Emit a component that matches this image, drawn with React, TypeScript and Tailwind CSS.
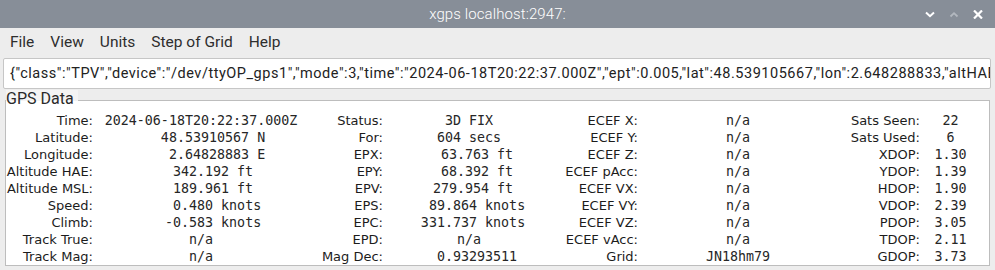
import React from "react";

const col1: [string, string][] = [
  ["Time:", "2024-06-18T20:22:37.000Z"],
  ["Latitude:", "   48.53910567 N"],
  ["Longitude:", "    2.64828883 E"],
  ["Altitude HAE:", "   342.192 ft"],
  ["Altitude MSL:", "   189.961 ft"],
  ["Speed:", "    0.480 knots"],
  ["Climb:", "   -0.583 knots"],
  ["Track True:", "n/a"],
  ["Track Mag:", "n/a"],
];
const col2: [string, string][] = [
  ["Status:", "3D FIX"],
  ["For:", "604 secs"],
  ["EPX:", "  63.763 ft"],
  ["EPY:", "  68.392 ft"],
  ["EPV:", " 279.954 ft"],
  ["EPS:", "  89.864 knots"],
  ["EPC:", " 331.737 knots"],
  ["EPD:", "n/a"],
  ["Mag Dec:", "  0.93293511"],
];
const col3: [string, string][] = [
  ["ECEF X:", "n/a"],
  ["ECEF Y:", "n/a"],
  ["ECEF Z:", "n/a"],
  ["ECEF pAcc:", "n/a"],
  ["ECEF VX:", "n/a"],
  ["ECEF VY:", "n/a"],
  ["ECEF VZ:", "n/a"],
  ["ECEF vAcc:", "n/a"],
  ["Grid:", "JN18hm79"],
];
const col4: [string, string][] = [
  ["Sats Seen:", "22"],
  ["Sats Used:", "6"],
  ["XDOP:", "1.30"],
  ["YDOP:", "1.39"],
  ["HDOP:", "1.90"],
  ["VDOP:", "2.39"],
  ["PDOP:", "3.05"],
  ["TDOP:", "2.11"],
  ["GDOP:", "3.73"],
];

const labelCls =
  "text-right whitespace-pre text-[13px] leading-[17px] text-[#1c1c1c] [font-family:'DejaVu_Sans',sans-serif]";
const valueCls =
  "text-center whitespace-pre text-[13.33px] leading-[17px] text-[#262626] [font-family:'DejaVu_Sans_Mono',monospace]";

export default function App() {
  const rows = col1.map((_, i) => [col1[i], col2[i], col3[i], col4[i]]);
  return (
    <div className="w-[995px] h-[270px] overflow-hidden bg-[#ededed] flex flex-col [font-family:Roboto,'Liberation_Sans',sans-serif]">
      {/* Title bar */}
      <div className="relative h-[28px] shrink-0 bg-[#878e98] flex items-center justify-center">
        <span className="text-white text-[15px] font-light tracking-[0.1px]">
          xgps localhost:2947:
        </span>
        <div className="absolute right-[12px] top-0 h-[28px] flex items-center gap-[14px]">
          <svg width="10" height="7" viewBox="0 0 10 7">
            <path d="M1 1.5 L5 5.2 L9 1.5" fill="none" stroke="#ffffff" strokeWidth="2" />
          </svg>
          <svg width="10" height="7" viewBox="0 0 10 7">
            <path d="M1.5 5.5 L5 2.2 L8.5 5.5" fill="none" stroke="#b3b8bf" strokeWidth="1.8" />
          </svg>
          <svg width="10" height="9" viewBox="0 0 10 9">
            <path d="M1 0.5 L9 8.5 M9 0.5 L1 8.5" fill="none" stroke="#ffffff" strokeWidth="2.2" />
          </svg>
        </div>
      </div>

      {/* Menu bar */}
      <div className="h-[30px] shrink-0 flex items-center pl-[2px] text-[15.5px] text-[#2e2e2e]">
        {["File", "View", "Units", "Step of Grid", "Help"].map((m) => (
          <span key={m} className="px-[8px]">
            {m}
          </span>
        ))}
      </div>

      {/* Entry */}
      <div className="mx-[3px] mr-[4px] h-[31px] shrink-0 bg-white border border-[#c6c6c6] rounded-[2px] flex items-center px-[6px] overflow-hidden">
        <span className="whitespace-pre text-[14.5px] tracking-[0.53px] text-[#222222]">
          {'{"class":"TPV","device":"/dev/ttyOP_gps1","mode":3,"time":"2024-06-18T20:22:37.000Z","ept":0.005,"lat":48.539105667,"lon":2.648288833,"altHAE":104.3}'}
        </span>
      </div>

      {/* Frame */}
      <div className="relative mt-[11px] ml-[5px] mr-[5px] shrink-0">
        <div className="absolute left-[1px] top-[-10px] h-[11px] w-[72px] bg-[#f4f4f4]" />
        <div className="absolute left-[1px] top-[-10.5px] text-[16px] leading-[18px] text-[#2a2a2a] pr-[1px]">
          GPS Data
        </div>
        <div className="border border-[#bdbdbd] bg-white h-[166px] pt-[11px]">
          <div className="grid grid-cols-[87px_216px_74px_172px_83px_200px_82px_61px]">
            {rows.map((r, i) => (
              <React.Fragment key={i}>
                {r.map(([l, v], j) => (
                  <React.Fragment key={j}>
                    <div className={labelCls}>{l}</div>
                    <div className={valueCls}>{v}</div>
                  </React.Fragment>
                ))}
              </React.Fragment>
            ))}
          </div>
        </div>
      </div>

      {/* cut-off next widget */}
      <div className="mt-[2px] ml-[8px] whitespace-pre text-[13.33px] leading-[17px] text-[#666] [font-family:'DejaVu_Sans_Mono',monospace]">
        {"|          |              ||||||||    |||||||            ||||||||   |||           ||||   ||||       |  |"}
      </div>
    </div>
  );
}
